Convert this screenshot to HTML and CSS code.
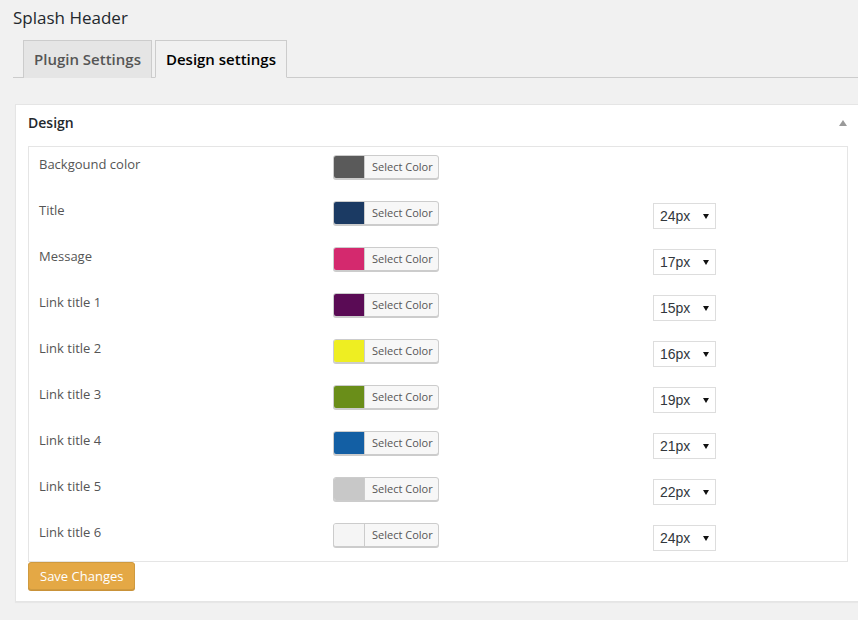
FILE: index.html
```html
<!DOCTYPE html>
<html lang="en">
<head>
<meta charset="utf-8">
<title>Splash Header</title>
<link rel="stylesheet" href="styles.css">
</head>
<body>
<div class="wrap">
  <h1 class="page-title">Splash Header</h1>
  <nav class="tabs">
    <a class="tab">Plugin Settings</a>
    <a class="tab tab-active">Design settings</a>
  </nav>
  <section class="panel">
    <header class="panel-head">
      <h2 class="panel-title">Design</h2>
      <span class="toggle"></span>
    </header>
    <div class="panel-body">
      <div class="table">
        <div class="row">
          <div class="label">Backgound color</div>
          <div class="cell"><span class="picker"><span class="swatch" style="background:#5a5a5a"></span><span class="pick-btn">Select Color</span></span></div>
          <div class="cell"></div>
        </div>
        <div class="row">
          <div class="label">Title</div>
          <div class="cell"><span class="picker"><span class="swatch" style="background:#1b3a63"></span><span class="pick-btn">Select Color</span></span></div>
          <div class="cell"><span class="select">24px<span class="arrow"></span></span></div>
        </div>
        <div class="row">
          <div class="label">Message</div>
          <div class="cell"><span class="picker"><span class="swatch" style="background:#d4296e"></span><span class="pick-btn">Select Color</span></span></div>
          <div class="cell"><span class="select">17px<span class="arrow"></span></span></div>
        </div>
        <div class="row">
          <div class="label">Link title 1</div>
          <div class="cell"><span class="picker"><span class="swatch" style="background:#5a0b55"></span><span class="pick-btn">Select Color</span></span></div>
          <div class="cell"><span class="select">15px<span class="arrow"></span></span></div>
        </div>
        <div class="row">
          <div class="label">Link title 2</div>
          <div class="cell"><span class="picker"><span class="swatch" style="background:#eeee22"></span><span class="pick-btn">Select Color</span></span></div>
          <div class="cell"><span class="select">16px<span class="arrow"></span></span></div>
        </div>
        <div class="row">
          <div class="label">Link title 3</div>
          <div class="cell"><span class="picker"><span class="swatch" style="background:#6a8e19"></span><span class="pick-btn">Select Color</span></span></div>
          <div class="cell"><span class="select">19px<span class="arrow"></span></span></div>
        </div>
        <div class="row">
          <div class="label">Link title 4</div>
          <div class="cell"><span class="picker"><span class="swatch" style="background:#135fa4"></span><span class="pick-btn">Select Color</span></span></div>
          <div class="cell"><span class="select">21px<span class="arrow"></span></span></div>
        </div>
        <div class="row">
          <div class="label">Link title 5</div>
          <div class="cell"><span class="picker"><span class="swatch" style="background:#c8c8c8"></span><span class="pick-btn">Select Color</span></span></div>
          <div class="cell"><span class="select">22px<span class="arrow"></span></span></div>
        </div>
        <div class="row">
          <div class="label">Link title 6</div>
          <div class="cell"><span class="picker"><span class="swatch" style="background:#f5f5f5"></span><span class="pick-btn">Select Color</span></span></div>
          <div class="cell"><span class="select">24px<span class="arrow"></span></span></div>
        </div>
      </div>
      <button class="save" type="button">Save Changes</button>
    </div>
  </section>
</div>
</body>
</html>
```

FILE: styles.css
```css
html, body {
  margin: 0;
  padding: 0;
  overflow: hidden;
}
body {
  background: #f1f1f1;
  font-family: "Open Sans", "Noto Sans", sans-serif;
  color: #444;
  width: 858px;
  height: 620px;
}
.wrap {
  padding: 0 0 0 13px;
}
.page-title {
  margin: 0;
  padding-top: 6px;
  font-size: 17px;
  font-weight: 500;
  line-height: 24px;
  color: #23282d;
}
.tabs {
  display: flex;
  gap: 3px;
  margin-top: 10px;
  padding-left: 10px;
  border-bottom: 1px solid #ccc;
  height: 37px;
  align-items: flex-end;
}
.tab {
  box-sizing: border-box;
  height: 38px;
  margin-bottom: -1px;
  padding: 0 10px;
  border: 1px solid #ccc;
  border-bottom: none;
  background: #e5e5e5;
  color: #555;
  font-size: 15px;
  font-weight: 600;
  line-height: 36px;
  white-space: nowrap;
}
.tab-active {
  background: #f1f1f1;
  color: #000;
  border-bottom: 1px solid #f1f1f1;
}
.panel {
  box-sizing: border-box;
  width: 846px;
  margin: 26px 0 0 2px;
  background: #fff;
  border: 1px solid #e5e5e5;
  box-shadow: 0 1px 1px rgba(0, 0, 0, 0.04);
}
.panel-head {
  display: flex;
  align-items: flex-start;
  justify-content: space-between;
  height: 41px;
  padding: 0 13px 0 12px;
}
.panel-title {
  margin: 0;
  padding-top: 8px;
  font-size: 14px;
  font-weight: 600;
  line-height: 20px;
  color: #23282d;
}
.toggle {
  width: 0;
  height: 0;
  margin-top: 15px;
  border-left: 4px solid transparent;
  border-right: 4px solid transparent;
  border-bottom: 6px solid #9a9a9a;
}
.panel-body {
  padding: 0 12px 11px 12px;
}
.table {
  border: 1px solid #e5e5e5;
}
.row {
  display: grid;
  grid-template-columns: 294px 320px 1fr;
  height: 46px;
  padding-left: 10px;
}
.label {
  padding-top: 8px;
  font-size: 13px;
  line-height: 18px;
  color: #555;
}
.picker {
  box-sizing: border-box;
  display: inline-flex;
  height: 24px;
  margin-top: 8px;
  border: 1px solid #ccc;
  border-radius: 3px;
  overflow: hidden;
  background: #f7f7f7;
  box-shadow: 0 1px 0 #ccc;
}
.swatch {
  width: 30px;
  border-right: 1px solid #ccc;
}
.pick-btn {
  padding: 0 5px 0 7px;
  font-size: 11px;
  line-height: 22px;
  color: #555;
}
.select {
  box-sizing: border-box;
  display: inline-flex;
  align-items: center;
  justify-content: space-between;
  width: 63px;
  height: 26px;
  margin-top: 10px;
  padding: 0 6px 0 6px;
  border: 1px solid #ddd;
  background: #fff;
  font-family: "Liberation Sans", Arial, sans-serif;
  font-size: 14px;
  color: #32373c;
}
.arrow {
  width: 0;
  height: 0;
  border-left: 3px solid transparent;
  border-right: 3px solid transparent;
  border-top: 5px solid #111;
}
.save {
  display: block;
  box-sizing: border-box;
  height: 28px;
  margin-top: 0;
  padding: 0 11px;
  border: 1px solid #cf9a3f;
  border-radius: 3px;
  background: #e4a845;
  color: #fff;
  font-family: "Open Sans", "Noto Sans", sans-serif;
  font-size: 13px;
  line-height: 26px;
  box-shadow: 0 1px 0 #c99239;
}
```
